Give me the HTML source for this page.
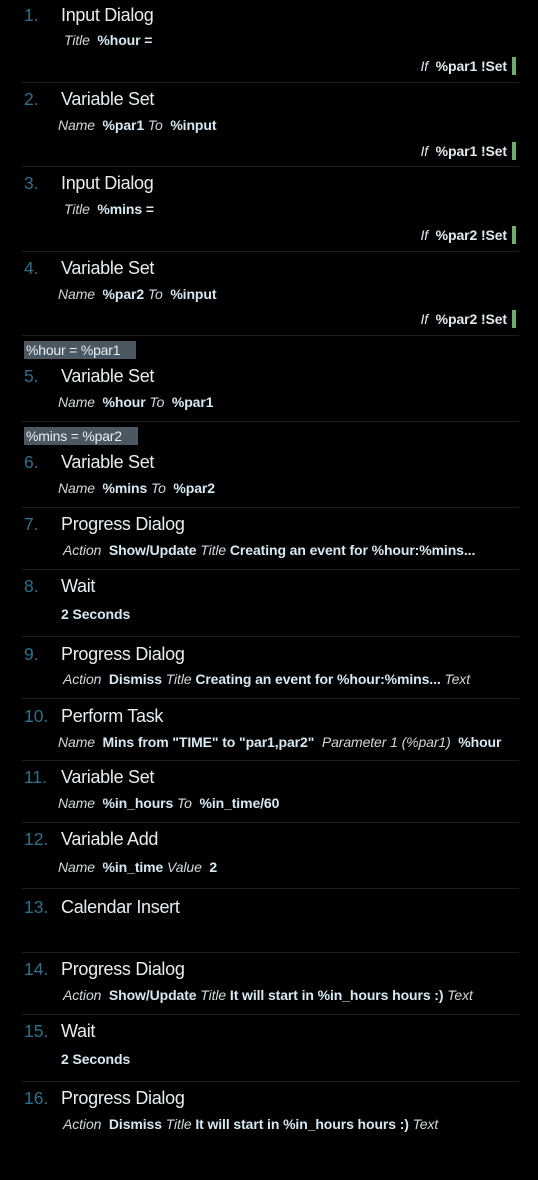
<!DOCTYPE html>
<html><head><meta charset="utf-8"><style>
body{margin:0;background:#000;width:538px;height:1180px;position:relative;overflow:hidden;font-family:"Liberation Sans",sans-serif}
.n{position:absolute;left:24px;color:#2d6f8c;font-size:17.5px;line-height:20px}
.t{position:absolute;left:61px;color:#e6eef3;font-size:18px;line-height:20px;letter-spacing:-0.3px}
.p{position:absolute;color:#dfe9ef;font-size:14px;letter-spacing:-0.1px;line-height:18px;white-space:nowrap}
.p i{font-weight:normal;color:#d0d8dd}
.p b{color:#d6e8f3}
.if{position:absolute;right:31px;color:#dfe9ef;font-size:14px;letter-spacing:-0.1px;line-height:18px}
.g{position:absolute;left:512px;width:4px;height:18px;background:#6fae6a}
.s{position:absolute;left:22px;width:497px;height:1px;background:#1c2024}
.l{position:absolute;left:24px;height:18px;background:#4b5761;color:#e8eef2;font-size:14px;letter-spacing:-0.2px;line-height:18px;padding-left:2px}
</style></head><body>
<div class="n" style="top:5px">1.</div><div class="t" style="top:5px">Input Dialog</div>
<div class="p" style="left:64px;top:31px"><i>Title</i> &nbsp;<b>%hour =</b></div>
<div class="if" style="top:57px"><i>If</i> &nbsp;<b>%par1 !Set</b></div><div class="g" style="top:57px"></div>
<div class="s" style="top:82px"></div>
<div class="n" style="top:89px">2.</div><div class="t" style="top:89px">Variable Set</div>
<div class="p" style="left:58px;top:116px"><i>Name</i> &nbsp;<b>%par1</b> <i>To</i> &nbsp;<b>%input</b></div>
<div class="if" style="top:142px"><i>If</i> &nbsp;<b>%par1 !Set</b></div><div class="g" style="top:142px"></div>
<div class="s" style="top:166px"></div>
<div class="n" style="top:173px">3.</div><div class="t" style="top:173px">Input Dialog</div>
<div class="p" style="left:64px;top:200px"><i>Title</i> &nbsp;<b>%mins =</b></div>
<div class="if" style="top:226px"><i>If</i> &nbsp;<b>%par2 !Set</b></div><div class="g" style="top:226px"></div>
<div class="s" style="top:251px"></div>
<div class="n" style="top:258px">4.</div><div class="t" style="top:258px">Variable Set</div>
<div class="p" style="left:58px;top:285px"><i>Name</i> &nbsp;<b>%par2</b> <i>To</i> &nbsp;<b>%input</b></div>
<div class="if" style="top:310px"><i>If</i> &nbsp;<b>%par2 !Set</b></div><div class="g" style="top:310px"></div>
<div class="s" style="top:335px"></div>
<div class="l" style="top:341px;width:110px">%hour = %par1</div>
<div class="n" style="top:366px">5.</div><div class="t" style="top:366px">Variable Set</div>
<div class="p" style="left:58px;top:393px"><i>Name</i> &nbsp;<b>%hour</b> <i>To</i> &nbsp;<b>%par1</b></div>
<div class="s" style="top:421px"></div>
<div class="l" style="top:427px;width:112px">%mins = %par2</div>
<div class="n" style="top:452px">6.</div><div class="t" style="top:452px">Variable Set</div>
<div class="p" style="left:58px;top:479px"><i>Name</i> &nbsp;<b>%mins</b> <i>To</i> &nbsp;<b>%par2</b></div>
<div class="s" style="top:507px"></div>
<div class="n" style="top:514px">7.</div><div class="t" style="top:514px">Progress Dialog</div>
<div class="p" style="left:63px;top:541px"><i>Action</i> &nbsp;<b>Show/Update</b> <i>Title</i> <b>Creating an event for %hour:%mins...</b></div>
<div class="s" style="top:569px"></div>
<div class="n" style="top:576px">8.</div><div class="t" style="top:576px">Wait</div>
<div class="p" style="left:61px;top:605px"><b>2 Seconds</b></div>
<div class="s" style="top:636px"></div>
<div class="n" style="top:644px">9.</div><div class="t" style="top:644px">Progress Dialog</div>
<div class="p" style="left:63px;top:670px"><i>Action</i> &nbsp;<b>Dismiss</b> <i>Title</i> <b>Creating an event for %hour:%mins...</b> <i>Text</i></div>
<div class="s" style="top:698px"></div>
<div class="n" style="top:706px">10.</div><div class="t" style="top:706px">Perform Task</div>
<div class="p" style="left:58px;top:733px"><i>Name</i> &nbsp;<b>Mins from "TIME" to "par1,par2"</b> &nbsp;<i>Parameter 1 (%par1)</i> &nbsp;<b>%hour</b></div>
<div class="s" style="top:760px"></div>
<div class="n" style="top:767px">11.</div><div class="t" style="top:767px">Variable Set</div>
<div class="p" style="left:58px;top:794px"><i>Name</i> &nbsp;<b>%in_hours</b> <i>To</i> &nbsp;<b>%in_time/60</b></div>
<div class="s" style="top:822px"></div>
<div class="n" style="top:829px">12.</div><div class="t" style="top:829px">Variable Add</div>
<div class="p" style="left:58px;top:858px"><i>Name</i> &nbsp;<b>%in_time</b> <i>Value</i> &nbsp;<b>2</b></div>
<div class="s" style="top:888px"></div>
<div class="n" style="top:897px">13.</div><div class="t" style="top:897px">Calendar Insert</div>
<div class="s" style="top:952px"></div>
<div class="n" style="top:959px">14.</div><div class="t" style="top:959px">Progress Dialog</div>
<div class="p" style="left:63px;top:986px"><i>Action</i> &nbsp;<b>Show/Update</b> <i>Title</i> <b>It will start in %in_hours hours :)</b> <i>Text</i></div>
<div class="s" style="top:1014px"></div>
<div class="n" style="top:1021px">15.</div><div class="t" style="top:1021px">Wait</div>
<div class="p" style="left:61px;top:1050px"><b>2 Seconds</b></div>
<div class="s" style="top:1081px"></div>
<div class="n" style="top:1088px">16.</div><div class="t" style="top:1088px">Progress Dialog</div>
<div class="p" style="left:63px;top:1115px"><i>Action</i> &nbsp;<b>Dismiss</b> <i>Title</i> <b>It will start in %in_hours hours :)</b> <i>Text</i></div>
</body></html>
